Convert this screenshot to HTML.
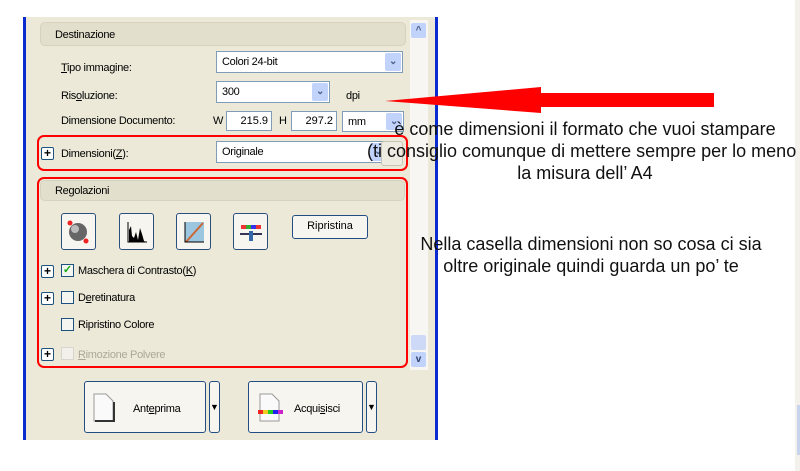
<!DOCTYPE html>
<html><head><meta charset="utf-8">
<style>
*{margin:0;padding:0;box-sizing:border-box}
body{width:800px;height:471px;background:#fff;position:relative;overflow:hidden;font-family:"Liberation Sans",sans-serif;font-size:11px;color:#000}
.a{position:absolute}
.lbl{position:absolute;font-size:11px;letter-spacing:-0.3px;white-space:nowrap}
.hdr{position:absolute;background:#e3dfcd;border:1px solid #d6d2c0;border-radius:5px}
.combo{position:absolute;background:#fff;border:1px solid #7f9db9;font-size:11px;padding:0 0 0 5px;line-height:20px;letter-spacing:-0.3px}
.dd{position:absolute;right:1px;top:1px;bottom:1px;width:16px;background:#c1d3fb;border-radius:2px;color:#4d6185;font-size:10px;text-align:center;line-height:18px;font-weight:bold}
.box{position:absolute;background:#fff;border:1px solid #7f9db9;text-align:right;padding:0 3px 0 0;line-height:18px;font-size:11px}
.red{position:absolute;border:2px solid #f00;border-radius:7px}
.plus{position:absolute;width:13px;height:13px;border:1px solid #1c5180;border-radius:2px;background:#fff;font-size:12px;line-height:10px;text-align:center;font-weight:bold}
.cb{position:absolute;width:13px;height:13px;border:1px solid #1c5180;background:#f4f4f0}
.ib{position:absolute;width:35px;height:37px;border:1px solid #2a4f7f;border-radius:3px;background:#f6f5ef}
.btn{position:absolute;border:1px solid #234e85;border-radius:3px;background:#f6f5ef}
.ann{position:absolute;font-size:18px;color:#111;white-space:nowrap;text-align:center}
</style></head><body>
<div class="a" style="left:23px;top:17px;width:415px;height:423px;background:#ece9d8"></div>
<div class="a" style="left:23px;top:17px;width:3px;height:423px;background:#0a2bd0"></div>
<div class="a" style="left:435px;top:17px;width:3px;height:423px;background:#0a2bd0"></div>
<div class="a" style="left:410px;top:20px;width:18px;height:350px;background:#f7f6f2"></div>
<div class="a" style="left:411px;top:23px;width:15px;height:15px;background:#c1d3fb;border-radius:2px;color:#4d6185;font-size:10px;text-align:center;line-height:15px;font-weight:bold">^</div>
<div class="a" style="left:411px;top:335px;width:15px;height:15px;background:#cdd9f7;border-radius:2px"></div>
<div class="a" style="left:411px;top:352px;width:15px;height:15px;background:#c1d3fb;border-radius:2px;color:#2a3f6a;font-size:10px;text-align:center;line-height:15px;font-weight:bold">v</div>
<div class="a" style="left:795px;top:0;width:5px;height:471px;background:#f3f1ec"></div>
<div class="a" style="left:797px;top:405px;width:3px;height:50px;background:#c8d4ee"></div>

<div class="hdr" style="left:40px;top:22px;width:366px;height:24px"></div>
<div class="lbl" style="left:55px;top:29px">Destinazione</div>
<div class="lbl" style="left:61px;top:62px"><u>T</u>ipo immagine:</div>
<div class="combo" style="left:216px;top:51px;width:187px;height:22px">Colori 24-bit<div class="dd">⌄</div></div>
<div class="lbl" style="left:61px;top:90px">Ris<u>o</u>luzione:</div>
<div class="combo" style="left:216px;top:81px;width:114px;height:22px">300<div class="dd">⌄</div></div>
<div class="lbl" style="left:346px;top:90px">dpi</div>
<div class="lbl" style="left:61px;top:115px">Dimensione Documento:</div>
<div class="lbl" style="left:213px;top:115px">W</div>
<div class="box" style="left:226px;top:111px;width:46px;height:20px">215.9</div>
<div class="lbl" style="left:279px;top:115px">H</div>
<div class="box" style="left:291px;top:111px;width:46px;height:20px">297.2</div>
<div class="combo" style="left:342px;top:111px;width:62px;height:21px">mm<div class="dd">⌄</div></div>

<div class="red" style="left:37px;top:135px;width:371px;height:36px"></div>
<div class="plus" style="left:41px;top:147px">+</div>
<div class="lbl" style="left:61px;top:148px">Dimensioni(<u>Z</u>):</div>
<div class="combo" style="left:216px;top:141px;width:172px;height:22px">Originale<div class="dd">⌄</div></div>
<div class="a" style="left:381px;top:141px;width:22px;height:25px;background:#eeece2;border:1px solid #c8c4b4;border-radius:3px"></div>

<div class="red" style="left:37px;top:177px;width:371px;height:191px"></div>
<div class="hdr" style="left:40px;top:180px;width:365px;height:21px"></div>
<div class="lbl" style="left:55px;top:185px">Regolazioni</div>

<div class="ib" style="left:61px;top:213px"><svg width="33" height="35"><circle cx="16" cy="18" r="9" fill="#666"/><circle cx="13" cy="15" r="4" fill="#bbb"/><circle cx="8" cy="9" r="2.5" fill="#e22"/><circle cx="24" cy="27" r="2.5" fill="#e22"/></svg></div>
<div class="ib" style="left:119px;top:213px"><svg width="33" height="35"><path d="M8 8V28H27" stroke="#000" fill="none"/><path d="M9 28V16L11 12 12 22 14 24 16 18 18 26 20 14 22 20 24 27 26 28Z" fill="#000"/></svg></div>
<div class="ib" style="left:176px;top:213px"><svg width="33" height="35"><rect x="8" y="8" width="19" height="20" fill="#9cc6e0"/><path d="M9 28L26 9" stroke="#c63" stroke-width="2"/><path d="M8 8V28H27" stroke="#000" fill="none"/></svg></div>
<div class="ib" style="left:233px;top:213px"><svg width="33" height="35"><rect x="7" y="11" width="20" height="4" fill="#e33"/><rect x="12" y="11" width="5" height="4" fill="#3a3"/><rect x="17" y="11" width="5" height="4" fill="#33e"/><path d="M6 20H28" stroke="#335" stroke-width="2"/><rect x="15" y="17" width="4" height="10" fill="#3568a8"/></svg></div>
<div class="btn" style="left:292px;top:215px;width:76px;height:24px;text-align:center;line-height:21px">Ripristina</div>

<div class="plus" style="left:41px;top:265px">+</div>
<div class="cb" style="left:61px;top:264px;color:#1a1;font-size:11px;line-height:11px;text-align:center;font-weight:bold">✓</div>
<div class="lbl" style="left:78px;top:265px">Maschera di Contrasto(<u>K</u>)</div>
<div class="plus" style="left:41px;top:292px">+</div>
<div class="cb" style="left:61px;top:291px"></div>
<div class="lbl" style="left:78px;top:292px">D<u>e</u>retinatura</div>
<div class="cb" style="left:61px;top:318px"></div>
<div class="lbl" style="left:78px;top:319px">Ripristino Colore</div>
<div class="plus" style="left:41px;top:348px">+</div>
<div class="cb" style="left:61px;top:347px;border-color:#d8d6cc;background:#f2f0ea"></div>
<div class="lbl" style="left:78px;top:349px;color:#aca899"><u>R</u>imozione Polvere</div>

<div class="btn" style="left:84px;top:381px;width:122px;height:52px"><svg class="a" style="left:7px;top:10px" width="24" height="32"><path d="M2 2H14L21 9V29H2Z" fill="#fafafa" stroke="#999"/><path d="M3 29H22V10" stroke="#333" stroke-width="2" fill="none"/></svg><div class="lbl" style="left:48px;top:21px">Ant<u>e</u>prima</div></div>
<div class="btn" style="left:209px;top:381px;width:11px;height:52px;font-size:9px;line-height:50px;text-align:center">▼</div>
<div class="btn" style="left:248px;top:381px;width:115px;height:52px"><svg class="a" style="left:7px;top:10px" width="30" height="32"><path d="M4 2H16L23 9V29H4Z" fill="#fafafa" stroke="#999"/><rect x="2" y="18" width="5" height="4" fill="#e22"/><rect x="7" y="18" width="5" height="4" fill="#ec2"/><rect x="12" y="18" width="5" height="4" fill="#2c2"/><rect x="17" y="18" width="5" height="4" fill="#22e"/><rect x="22" y="18" width="5" height="4" fill="#c2c"/></svg><div class="lbl" style="left:45px;top:21px">Acqui<u>s</u>isci</div></div>
<div class="btn" style="left:366px;top:381px;width:11px;height:52px;font-size:9px;line-height:50px;text-align:center">▼</div>

<svg class="a" style="left:0;top:0" width="800" height="471"><path d="M385 101L541 87V93H714V107H541V113Z" fill="#f00"/></svg>

<div class="ann" style="left:385px;top:119px;width:400px">è come dimensioni il formato che vuoi stampare</div>
<div class="ann" style="left:367px;top:141px;width:460px;text-align:left">(ti consiglio comunque di mettere sempre per lo meno</div>
<div class="ann" style="left:385px;top:163px;width:400px">la misura dell’ A4</div>
<div class="ann" style="left:391px;top:234px;width:400px">Nella casella dimensioni non so cosa ci sia</div>
<div class="ann" style="left:391px;top:256px;width:400px">oltre originale quindi guarda un po’ te</div>
</body></html>
